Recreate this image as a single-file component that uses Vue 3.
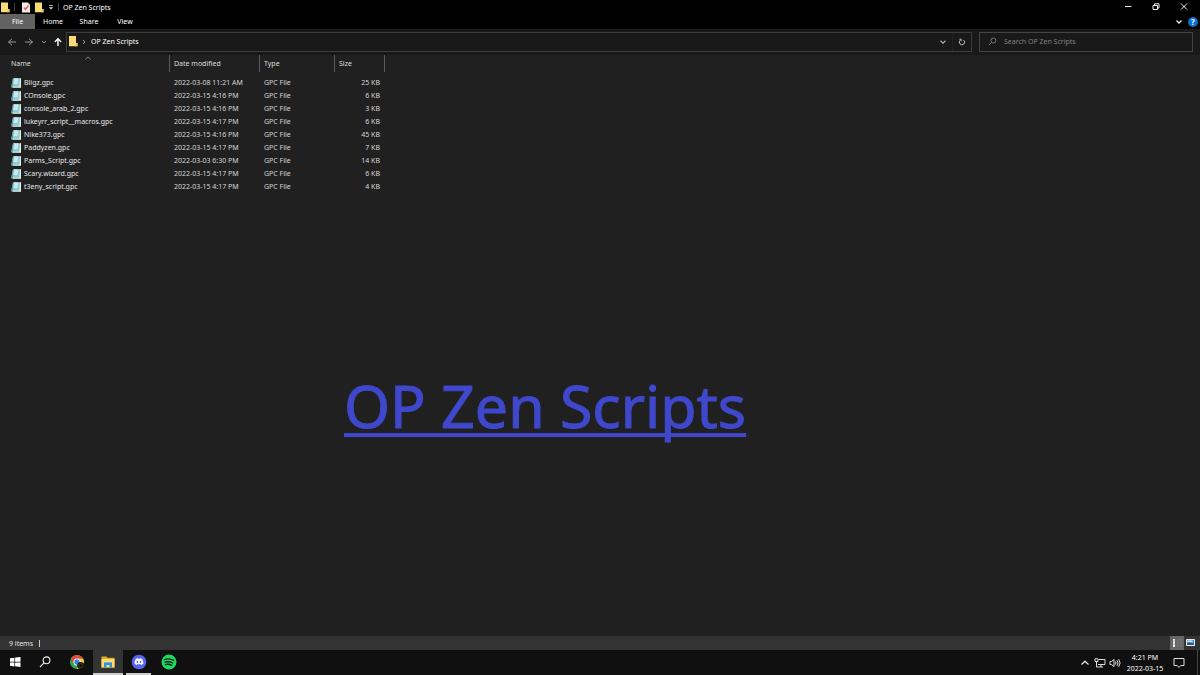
<script setup>
import { ref } from 'vue'

const query = ref('')
const tabs = ['File', 'Home', 'Share', 'View']
const files = [
  ['Bligz.gpc', '2022-03-08 11:21 AM', '25 KB'],
  ['COnsole.gpc', '2022-03-15 4:16 PM', '6 KB'],
  ['console_arab_2.gpc', '2022-03-15 4:16 PM', '3 KB'],
  ['lukeyrr_script__macros.gpc', '2022-03-15 4:17 PM', '6 KB'],
  ['Nike373.gpc', '2022-03-15 4:16 PM', '45 KB'],
  ['Paddyzen.gpc', '2022-03-15 4:17 PM', '7 KB'],
  ['Parms_Script.gpc', '2022-03-03 6:30 PM', '14 KB'],
  ['Scary.wizard.gpc', '2022-03-15 4:17 PM', '6 KB'],
  ['t3eny_script.gpc', '2022-03-15 4:17 PM', '4 KB'],
]
</script>

<template>
  <div class="desktop">
    <header class="titlebar">
      <svg class="folder" viewBox="0 0 10 11"><path d="M1 .5h7V7h1.500v3.200H1z" fill="#f9dc78" /><path d="M8 7h1.500v3.200H7z" fill="#edc65a" /></svg>
      <span class="bar"></span>
      <button class="plain page" aria-label="Properties">
        <svg viewBox="0 0 8 11"><path d="M0 .5h6l2 2v8H0z" fill="#f3eeee" /><path d="M6 .5v2h2z" fill="#aaa" /><path d="M1.800 5.500l1.700 2 3-4" fill="none" stroke="#dc5f3d" stroke-width="1.300" /></svg>
      </button>
      <button class="plain new-folder" aria-label="New folder">
        <svg class="folder" viewBox="0 0 10 11"><path d="M1 .5h7V7h1.500v3.200H1z" fill="#f9dc78" /><path d="M8 7h1.500v3.200H7z" fill="#edc65a" /></svg>
      </button>
      <button class="plain customize" aria-label="Customize toolbar">
        <svg viewBox="0 0 6 6"><path d="M1 1.500h4" stroke="#ddd" stroke-width=".8" /><path d="M.8 3.200h4.400L3 5.600z" fill="#ddd" /></svg>
      </button>
      <span class="bar"></span>
      <span class="title">OP Zen Scripts</span>
      <div class="window-buttons">
        <button class="plain" aria-label="Minimize"><svg viewBox="0 0 8 8"><path d="M1 3.500h6.500" /></svg></button>
        <button class="plain" aria-label="Restore"><svg viewBox="0 0 8 8"><path d="M1 2.500h4.500V6.500H1zM2.500 2.500V.8H7v4.200H5.500" /></svg></button>
        <button class="plain" aria-label="Close"><svg viewBox="0 0 8 8"><path d="M1 .5l6 6M7 .5L1 6.500" /></svg></button>
      </div>
    </header>

    <nav class="ribbon">
      <button v-for="(tab, i) in tabs" :key="tab" class="plain tab" :class="{ file: i === 0 }">{{ tab }}</button>
      <div class="ribbon-end">
        <button class="plain" aria-label="Expand ribbon"><svg class="chev" viewBox="0 0 8 8"><path d="M1.500 2.500L4 5l2.500-2.500" fill="none" stroke="#eee" stroke-width="1.300" /></svg></button>
        <button class="plain help" aria-label="Help">?</button>
      </div>
    </nav>

    <div class="address-row">
      <div class="nav-buttons">
        <button class="plain" aria-label="Back"><svg viewBox="0 0 10 10"><path d="M9 5H1.500M5 1.800L1.500 5 5 8.200" stroke="#999" /></svg></button>
        <button class="plain" aria-label="Forward"><svg viewBox="0 0 10 10"><path d="M1 5h7.500M5 1.800L8.500 5 5 8.200" stroke="#999" /></svg></button>
        <button class="plain recent" aria-label="Recent locations"><svg viewBox="0 0 10 10"><path d="M3 4l2 2 2-2" stroke="#999" /></svg></button>
        <button class="plain" aria-label="Up"><svg viewBox="0 0 10 10"><path d="M5 9V1.500M1.800 5L5 1.700 8.200 5" stroke="#fff" stroke-width="1.400" /></svg></button>
      </div>
      <div class="address">
        <svg class="folder" viewBox="0 0 10 11"><path d="M0 0h7v7h1.500v3.200H0z" fill="#f9dc78" /><path d="M7 7h1.500v3.200H6z" fill="#edc65a" /></svg>
        <svg class="crumb" viewBox="0 0 6 8"><path d="M2 2l2 2-2 2" fill="none" stroke="#aaa" stroke-width=".9" /></svg>
        <button class="plain path">OP Zen Scripts</button>
        <button class="plain drop" aria-label="Previous locations"><svg class="chev" viewBox="0 0 8 8"><path d="M1.500 2.800L4 5.200l2.500-2.400" fill="none" stroke="#aaa" stroke-width="1.200" /></svg></button>
        <button class="plain refresh" aria-label="Refresh"><svg class="chev" viewBox="0 0 8 8"><path d="M5.500 2.100A2.600 2.600 0 1 1 2.300 2.200M1.400 1.200h1.800v2" fill="none" stroke="#bbb" stroke-width="1" /></svg></button>
      </div>
      <label class="search">
        <svg viewBox="0 0 9 9"><circle cx="5.400" cy="3.500" r="2.500" /><path d="M3.600 5.300L.8 8.200" /></svg>
        <input v-model="query" type="text" placeholder="Search OP Zen Scripts" aria-label="Search OP Zen Scripts" />
      </label>
    </div>

    <main class="content">
      <table>
        <thead>
          <tr>
            <th class="c-name">Name<svg class="sort" viewBox="0 0 6 4"><path d="M.5 3.300L3 .9l2.500 2.400" fill="none" stroke="#999" stroke-width=".8" /></svg></th>
            <th class="c-date">Date modified</th>
            <th class="c-type">Type</th>
            <th class="c-size">Size</th>
          </tr>
        </thead>
        <tbody>
          <tr v-for="file in files" :key="file[0]">
            <td class="name">
              <div class="name-cell">
                <svg viewBox="0 0 10 10"><path d="M2 .3h8v9H.2z" fill="#8fcbd8" /><path d="M2 .3L.2 9.300h1.500L3 .3z" fill="#5f97a4" /><path d="M3 .3h4.500L6.500 6H2.300z" fill="#c5e9ef" /><path d="M9 .3h1v9.400H1.500V8.800h7z" fill="#e9f0dc" /></svg>
                <span>{{ file[0] }}</span>
              </div>
            </td>
            <td>{{ file[1] }}</td>
            <td>GPC File</td>
            <td class="size">{{ file[2] }}</td>
          </tr>
        </tbody>
      </table>
      <h1>OP Zen Scripts</h1>
    </main>

    <footer class="status">
      <span>9 items</span><span class="status-bar"></span>
      <div class="views">
        <button class="plain on" aria-label="Details view"><svg viewBox="0 0 14 14"><path d="M3 3h2v8H3z" fill="#eee" /><path d="M3 5h2M3 8h2" stroke="#b99" stroke-width=".8" /><path d="M7 4h2M10 4h2M7 7h2M10 7h2M7 10h2M10 10h2" stroke="#888" stroke-width=".8" /></svg></button>
        <button class="plain" aria-label="Large icons view"><svg viewBox="0 0 14 14"><path d="M2.500 3.500h8v6h-8z" fill="#3d91d9" stroke="#eee" /><path d="M3 9V7.500l3-1 1.500 1H10V9z" fill="#35536a" /><path d="M3.500 4.500h5v1.500h-5z" fill="#d5edff" /></svg></button>
      </div>
    </footer>

    <div class="taskbar">
      <button class="plain" aria-label="Start"><svg viewBox="0 0 16 16"><path d="M3 4.300l4.400-.6v4H3zM8.100 3.600L13.500 3v4.700H8.100zM3 8.400h4.400v4L3 11.800zM8.100 8.400h5.400V13l-5.400-.7z" fill="#fff" /></svg></button>
      <button class="plain" aria-label="Search"><svg viewBox="0 0 16 16"><circle cx="9.500" cy="6.300" r="3.400" fill="none" stroke="#eee" stroke-width="1.100" /><path d="M7 8.800L3 13" stroke="#eee" stroke-width="1.100" /></svg></button>
      <button class="plain chrome" aria-label="Chrome">
        <svg viewBox="0 0 16 16"><circle cx="8" cy="8" r="7" fill="#36a457" /><path d="M14.100 4.500A7 7 0 0 1 7.800 15L11 9.700 8 4.500z" fill="#f5ca3a" /><path d="M1.900 4.500A7 7 0 0 1 14.100 4.500H8L5 9.700z" fill="#e34b3d" /><circle cx="8" cy="8" r="3.500" fill="#fff" /><circle cx="8" cy="8" r="2.700" fill="#3b82e5" /><circle cx="11.700" cy="11.500" r="3.500" fill="#171209" /><circle cx="11.700" cy="11.500" r="2" fill="none" stroke="#56451e" stroke-width=".7" /></svg>
      </button>
      <button class="plain explorer" aria-label="File Explorer">
        <svg viewBox="0 0 16 16"><path d="M1.500 2.500h5l1 1.300h7v9.700h-13z" fill="#e8aa29" /><path d="M1.500 5h13v8.500h-13z" fill="#ffdc6c" /><path d="M4 13.500V8h8v5.500h-2.500V11h-3v2.500z" fill="#3292dc" /><path d="M4 8h8v1H4z" fill="#67b4ed" /></svg>
      </button>
      <button class="plain discord" aria-label="Discord">
        <svg viewBox="0 0 16 16"><circle cx="8" cy="8" r="7.300" fill="#5865f2" /><path d="M5 4.800c.8-.5 1.500-.6 1.800-.6l.3.600h1.800l.3-.6c.4 0 1.100.2 1.800.6 1 1.500 1.500 3.200 1.300 5-.7.600-1.500 1-2.200 1.100l-.6-.9c-1 .3-2 .3-3 0l-.6.900c-.8-.1-1.500-.5-2.200-1.100-.2-1.800.3-3.500 1.300-5z" fill="#fff" /><circle cx="6.400" cy="8" r=".9" fill="#5865f2" /><circle cx="9.600" cy="8" r=".9" fill="#5865f2" /></svg>
      </button>
      <button class="plain" aria-label="Spotify">
        <svg viewBox="0 0 16 16"><circle cx="8" cy="8" r="7.500" fill="#1ed760" /><path d="M3.600 5.600c3-1 6.400-.7 9 .8M4 8.200c2.600-.8 5.400-.5 7.700.8M4.400 10.600c2.200-.6 4.400-.4 6.400.7" fill="none" stroke="#102016" stroke-width="1.300" stroke-linecap="round" /></svg>
      </button>
      <div class="tray">
        <button class="plain" aria-label="Show hidden icons"><svg viewBox="0 0 12 12"><path d="M2.500 7.500L6 4.200l3.500 3.300" stroke-width="1.300" /></svg></button>
        <button class="plain" aria-label="Network"><svg viewBox="0 0 12 12"><path d="M4.500 2.500h6.500v5H4M7 7.500V10M5 10h4M1 1.800h3v2.700H1zM2.500 4.500V10H5" /></svg></button>
        <button class="plain" aria-label="Volume"><svg viewBox="0 0 12 12"><path d="M1 4.500h1.500L5 2.500v7L2.500 7.500H1zM6.500 4.500q1 1.500 0 3M8 3.200q2 2.800 0 5.600M9.700 2.200q2.800 3.800 0 7.600" /></svg></button>
        <div class="clock"><span>4:21 PM</span><span>2022-03-15</span></div>
        <button class="plain notice" aria-label="Notifications"><svg viewBox="0 0 12 12"><path d="M1 1.500h10v7H7.800L6 10.500 4.300 8.500H1z" /></svg></button>
      </div>
    </div>
  </div>
</template>

<style>
body { margin: 0; background: #202020; }
</style>

<style scoped>
* { box-sizing: border-box; }
.desktop {
  display: flex;
  flex-direction: column;
  min-height: 100vh;
  background: #202020;
  color: #e4e4e4;
  font: 7px/13px "Noto Sans", "Open Sans", sans-serif;
}
svg { display: block; flex: none; }
.plain {
  display: flex;
  align-items: center;
  justify-content: center;
  margin: 0;
  padding: 0;
  border: 0;
  background: none;
  color: inherit;
  font: inherit;
}
.folder { width: 10px; height: 11px; }
.titlebar { display: flex; align-items: center; height: 14px; background: #000; }
.bar { width: 1px; height: 8px; background: #444; }
.titlebar > .bar:nth-child(2) { margin-left: 4px; }
.page { width: 8px; margin-left: 7px; }
.page svg { width: 8px; height: 11px; }
.new-folder { margin-left: 4px; }
.customize { width: 14px; }
.customize svg { width: 6px; height: 6px; }
.title { margin-left: 4px; color: #fff; }
.window-buttons { display: flex; gap: 20px; margin-left: auto; padding-right: 12px; }
.window-buttons svg { width: 8px; height: 8px; fill: none; stroke: #eee; stroke-width: 1; }

.ribbon { display: flex; height: 15px; background: #000; color: #fff; }
.tab { width: 36px; }
.tab.file { width: 35px; background: #626262; }
.ribbon-end { display: flex; align-items: center; gap: 5px; margin-left: auto; padding-right: 2px; }
.chev { width: 8px; height: 8px; }
.help { width: 10px; height: 10px; border-radius: 50%; background: #0a6fd0; color: #fff; font-weight: bold; font-size: 8px; line-height: 10px; }

.address-row { display: flex; align-items: center; height: 26px; padding: 0 7px 1px 0; background: #191919; }
.nav-buttons { display: flex; align-items: center; gap: 7px; width: 66px; padding-left: 7px; }
.nav-buttons svg { width: 10px; height: 10px; fill: none; }
.nav-buttons .recent { width: 5px; }
.address { display: flex; align-items: center; flex: 1; height: 20px; padding-left: 2px; border: 1px solid #3d3d3d; }
.crumb { width: 6px; height: 8px; margin-left: 2px; }
.path { margin-left: 4px; color: #fff; }
.drop { margin-left: auto; width: 18px; height: 18px; }
.refresh { width: 19px; height: 18px; border-left: 1px solid #222; }
.search { display: flex; align-items: center; width: 214px; height: 20px; margin-left: 7px; padding: 0 8px; border: 1px solid #444; }
.search svg { width: 9px; height: 9px; fill: none; stroke: #777; stroke-width: 1; }
.search input { flex: 1; min-width: 0; margin-left: 7px; padding: 0; border: 0; outline: 0; background: none; color: #ddd; font: inherit; }
.search input::placeholder { color: #808080; opacity: 1; }

.content { flex: 1; }
table { width: 385px; border-collapse: separate; border-spacing: 0; table-layout: fixed; }
th { position: relative; height: 17px; padding: 0 0 0 4px; border-right: 1px solid #5a5a5a; color: #ddd; font-weight: normal; text-align: left; }
.c-name { width: 170px; padding-left: 11px; }
.c-date { width: 90px; }
.c-type { width: 75px; }
.c-size { width: 50px; }
.sort { position: absolute; top: 1px; left: 85px; width: 6px; height: 4px; }
tbody::before { content: ""; display: block; height: 4px; }
td { height: 13px; padding: 0 5px 0 4px; white-space: nowrap; color: #d6d6d6; }
td.name { padding-left: 11px; color: #e8e8e8; }
.name-cell { display: flex; align-items: center; gap: 3px; }
.name-cell svg { width: 10px; height: 10px; }
.size { text-align: right; }
h1 {
  margin: 172px 0 0 344px;
  color: #3f48cc;
  font-size: 59px;
  font-weight: normal;
  line-height: 80px;
  -webkit-text-stroke: 1px #3f48cc;
  text-decoration: underline 4px;
  text-decoration-skip-ink: none;
  text-underline-offset: 5px;
  white-space: nowrap;
}

.status { display: flex; align-items: center; height: 14px; padding-left: 9px; background: #333; }
.status-bar { width: 1px; height: 7px; margin-left: 6px; background: #ccc; }
.views { display: flex; margin-left: auto; padding-right: 2px; }
.views button { width: 14px; height: 14px; }
.views svg { width: 14px; height: 14px; }
.views .on { background: #666; }

.taskbar { display: flex; height: 25px; background: #101010; }
.taskbar > button { width: 30px; height: 25px; border-bottom: 2px solid transparent; }
.taskbar > button svg { width: 16px; height: 16px; }
.taskbar > .chrome { width: 33px; }
.taskbar > .explorer { background: #333; border-bottom-color: #ccc; }
.taskbar > .discord { width: 25px; margin: 0 3px; border-bottom-color: #ccc; }
.tray { display: flex; align-items: center; margin-left: auto; gap: 3px; border-right: 1px solid #444; margin-right: 2px; padding-right: 12px; }
.tray svg { width: 12px; height: 12px; fill: none; stroke: #ddd; stroke-width: 1; }
.clock { display: flex; flex-direction: column; align-items: center; width: 42px; line-height: 11px; color: #fff; }
.notice { margin-left: 4px; }
</style>
